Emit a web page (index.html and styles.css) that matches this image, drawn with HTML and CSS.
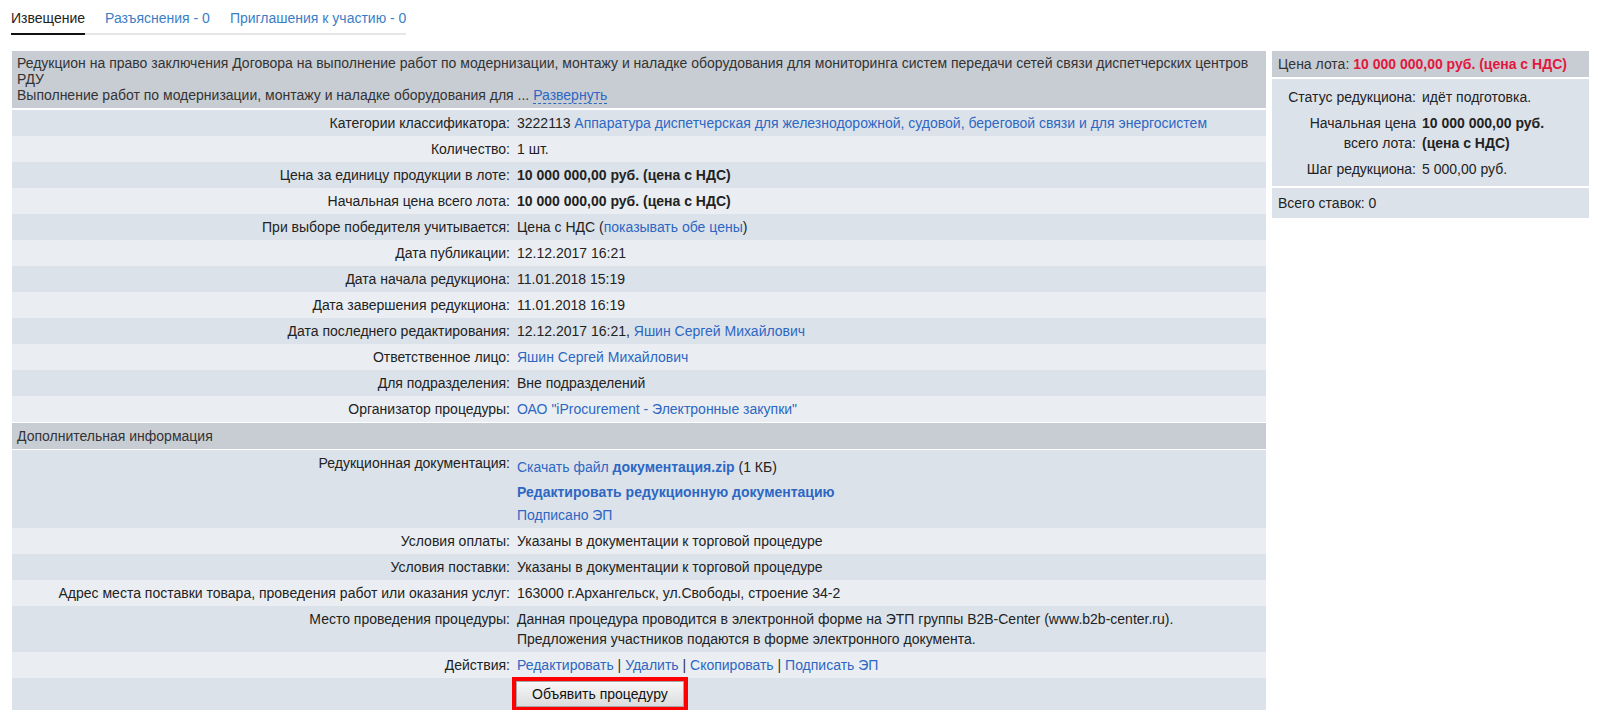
FILE: index.html
```html
<!DOCTYPE html>
<html lang="ru">
<head>
<meta charset="utf-8">
<title>Извещение</title>
<link rel="stylesheet" href="styles.css">
</head>
<body>
<div class="page">
  <div class="tabs">
    <span class="tab tab-active">Извещение</span>
    <a class="tab" href="#">Разъяснения - 0</a>
    <a class="tab" href="#">Приглашения к участию - 0</a>
  </div>

  <div class="layout">
    <div class="main">
      <div class="head">
        Редукцион на право заключения Договора на выполнение работ по модернизации, монтажу и наладке оборудования для мониторинга систем передачи сетей связи диспетчерских центров РДУ<br>
        Выполнение работ по модернизации, монтажу и наладке оборудования для ... <a class="dashed" href="#">Развернуть</a>
      </div>
      <div class="row dark"><div class="k">Категории классификатора:</div><div class="v">3222113 <a href="#">Аппаратура диспетчерская для железнодорожной, судовой, береговой связи и для энергосистем</a></div></div>
      <div class="row light"><div class="k">Количество:</div><div class="v">1 шт.</div></div>
      <div class="row dark"><div class="k">Цена за единицу продукции в лоте:</div><div class="v"><b>10 000 000,00 руб. (цена с НДС)</b></div></div>
      <div class="row light"><div class="k">Начальная цена всего лота:</div><div class="v"><b>10 000 000,00 руб. (цена с НДС)</b></div></div>
      <div class="row dark"><div class="k">При выборе победителя учитывается:</div><div class="v">Цена с НДС (<a href="#">показывать обе цены</a>)</div></div>
      <div class="row light"><div class="k">Дата публикации:</div><div class="v">12.12.2017 16:21</div></div>
      <div class="row dark"><div class="k">Дата начала редукциона:</div><div class="v">11.01.2018 15:19</div></div>
      <div class="row light"><div class="k">Дата завершения редукциона:</div><div class="v">11.01.2018 16:19</div></div>
      <div class="row dark"><div class="k">Дата последнего редактирования:</div><div class="v">12.12.2017 16:21, <a href="#">Яшин Сергей Михайлович</a></div></div>
      <div class="row light"><div class="k">Ответственное лицо:</div><div class="v"><a href="#">Яшин Сергей Михайлович</a></div></div>
      <div class="row dark"><div class="k">Для подразделения:</div><div class="v">Вне подразделений</div></div>
      <div class="row light"><div class="k">Организатор процедуры:</div><div class="v"><a href="#">ОАО "iProcurement - Электронные закупки"</a></div></div>

      <div class="section">Дополнительная информация</div>
      <div class="row dark"><div class="k">Редукционная документация:</div><div class="v">
        <div class="doc-line first"><a href="#">Скачать файл <b>документация.zip</b></a> (1 КБ)</div>
        <div class="doc-line second"><a href="#"><b>Редактировать редукционную документацию</b></a></div>
        <div class="doc-line third"><a href="#">Подписано ЭП</a></div>
      </div></div>
      <div class="row light"><div class="k">Условия оплаты:</div><div class="v">Указаны в документации к торговой процедуре</div></div>
      <div class="row dark"><div class="k">Условия поставки:</div><div class="v">Указаны в документации к торговой процедуре</div></div>
      <div class="row light"><div class="k">Адрес места поставки товара, проведения работ или оказания услуг:</div><div class="v">163000 г.Архангельск, ул.Свободы, строение 34-2</div></div>
      <div class="row dark"><div class="k">Место проведения процедуры:</div><div class="v">Данная процедура проводится в электронной форме на ЭТП группы B2B-Center (www.b2b-center.ru).<br>Предложения участников подаются в форме электронного документа.</div></div>
      <div class="row light"><div class="k">Действия:</div><div class="v"><a href="#">Редактировать</a> <span class="sep">|</span> <a href="#">Удалить</a> <span class="sep">|</span> <a href="#">Скопировать</a> <span class="sep">|</span> <a href="#">Подписать ЭП</a></div></div>
      <div class="row dark"><div class="k"></div><div class="v btn-cell"><span class="highlight"><button class="btn" type="button">Объявить процедуру</button></span></div></div>
    </div>

    <div class="side">
      <div class="side-head">Цена лота: <b class="price">10 000 000,00 руб. (цена с НДС)</b></div>
      <div class="side-body">
        <div class="srow"><div class="sk">Статус редукциона:</div><div class="sv">идёт подготовка.</div></div>
        <div class="srow"><div class="sk">Начальная цена всего лота:</div><div class="sv"><b>10 000 000,00 руб. (цена с НДС)</b></div></div>
        <div class="srow"><div class="sk">Шаг редукциона:</div><div class="sv">5 000,00 руб.</div></div>
      </div>
      <div class="side-foot">Всего ставок: 0</div>
    </div>
  </div>
</div>
</body>
</html>
```

FILE: styles.css
```css
* { box-sizing: border-box; }
html, body { margin: 0; padding: 0; background: #fff; }
body {
  font-family: "Liberation Sans", Arial, sans-serif;
  font-size: 14px;
  color: #222;
}
a { color: #2c67c3; text-decoration: none; }
b { font-weight: bold; }

.page { padding: 8px 9px 0 12px; }

.tabs {
  display: inline-flex;
  gap: 20px;
  border-bottom: 2px solid #e6e6e6;
  margin-left: -1px;
}
.tab {
  line-height: 20px;
  padding-bottom: 5px;
  margin-bottom: -2px;
  border-bottom: 2px solid transparent;
  color: #3b7ec6;
}
.tab-active { color: #222; border-bottom-color: #111; }

.layout {
  display: flex;
  gap: 6px;
  margin-top: 16px;
  align-items: flex-start;
}
.main { flex: 1; min-width: 0; }

.head {
  background: #c8cdd4;
  color: #333;
  padding: 4px 5px 5px;
  line-height: 16px;
  border-bottom: 2px solid #fff;
}
.dashed { border-bottom: 1px dashed #2c67c3; }

.section {
  background: #c8cdd4;
  color: #333;
  padding: 3px 5px;
  line-height: 20px;
  border-top: 1px solid #fff;
  border-bottom: 1px solid #fff;
}

.row {
  display: grid;
  grid-template-columns: 502px 1fr;
  line-height: 20px;
}
.row.dark { background: #dce2ea; }
.row.light { background: #eaeef2; }
.row .k { text-align: right; padding: 3px 4px; }
.row .v { padding: 3px 4px 3px 3px; }

.doc-line.first { margin-top: 4px; }
.doc-line.second { margin-top: 5px; }
.doc-line.third { margin-top: 3px; }

.sep { color: #333; }

.highlight {
  display: inline-block;
  vertical-align: top;
  margin: -4px 0 -4px -5px;
  border: 4px solid #ff0000;
}
.btn {
  display: block;
  height: 26px;
  padding: 0 15px;
  font-family: "Liberation Sans", Arial, sans-serif;
  font-size: 14px;
  color: #111;
  background: linear-gradient(#f8f8f8, #dcdcdc);
  border: 1px solid #a6a6a6;
  border-radius: 0;
}

.side { width: 317px; flex: none; }
.side-head {
  background: #c8cdd4;
  color: #333;
  padding: 3px 6px;
  line-height: 20px;
  border-bottom: 2px solid #fff;
}
.price { color: #e3173e; }
.side-body {
  background: #dce2ea;
  padding: 5px 6px 4px;
  border-bottom: 2px solid #fff;
}
.srow {
  display: grid;
  grid-template-columns: 141px 1fr;
  line-height: 20px;
}
.sk { text-align: right; padding: 3px; }
.sv { padding: 3px; }
.side-foot {
  background: #dce2ea;
  padding: 5px 6px;
  line-height: 20px;
}
```
